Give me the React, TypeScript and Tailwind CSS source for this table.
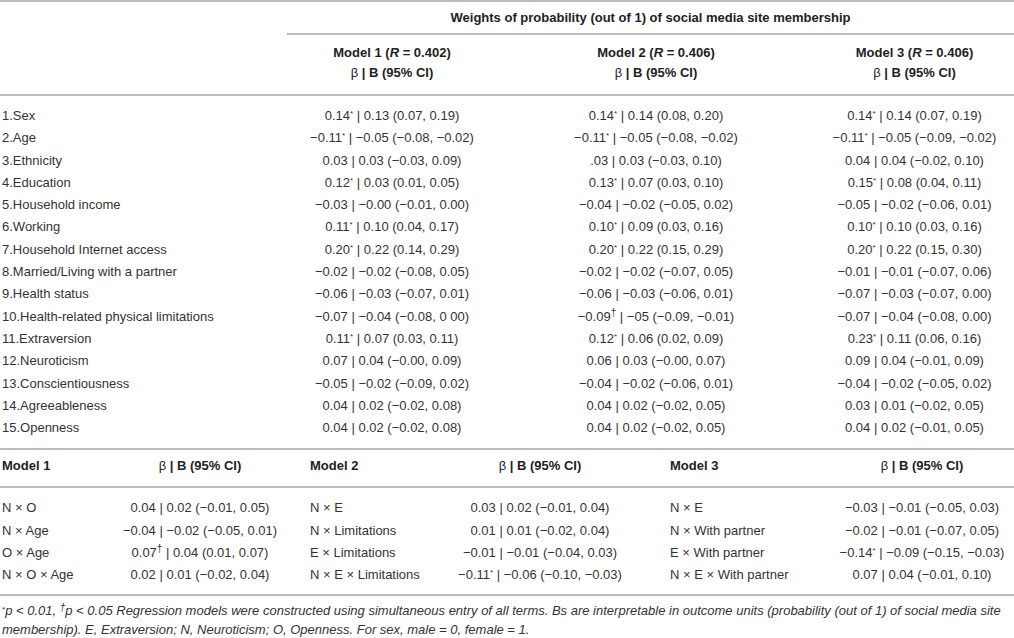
type Cell = [string, string, string];

const mainRows: { label: string; cells: Cell[] }[] = [
  { label: "1.Sex", cells: [["0.14", "*", "0.13 (0.07, 0.19)"], ["0.14", "*", "0.14 (0.08, 0.20)"], ["0.14", "*", "0.14 (0.07, 0.19)"]] },
  { label: "2.Age", cells: [["−0.11", "*", "−0.05 (−0.08, −0.02)"], ["−0.11", "*", "−0.05 (−0.08, −0.02)"], ["−0.11", "*", "−0.05 (−0.09, −0.02)"]] },
  { label: "3.Ethnicity", cells: [["0.03", "", "0.03 (−0.03, 0.09)"], [".03", "", "0.03 (−0.03, 0.10)"], ["0.04", "", "0.04 (−0.02, 0.10)"]] },
  { label: "4.Education", cells: [["0.12", "*", "0.03 (0.01, 0.05)"], ["0.13", "*", "0.07 (0.03, 0.10)"], ["0.15", "*", "0.08 (0.04, 0.11)"]] },
  { label: "5.Household income", cells: [["−0.03", "", "−0.00 (−0.01, 0.00)"], ["−0.04", "", "−0.02 (−0.05, 0.02)"], ["−0.05", "", "−0.02 (−0.06, 0.01)"]] },
  { label: "6.Working", cells: [["0.11", "*", "0.10 (0.04, 0.17)"], ["0.10", "*", "0.09 (0.03, 0.16)"], ["0.10", "*", "0.10 (0.03, 0.16)"]] },
  { label: "7.Household Internet access", cells: [["0.20", "*", "0.22 (0.14, 0.29)"], ["0.20", "*", "0.22 (0.15, 0.29)"], ["0.20", "*", "0.22 (0.15, 0.30)"]] },
  { label: "8.Married/Living with a partner", cells: [["−0.02", "", "−0.02 (−0.08, 0.05)"], ["−0.02", "", "−0.02 (−0.07, 0.05)"], ["−0.01", "", "−0.01 (−0.07, 0.06)"]] },
  { label: "9.Health status", cells: [["−0.06", "", "−0.03 (−0.07, 0.01)"], ["−0.06", "", "−0.03 (−0.06, 0.01)"], ["−0.07", "", "−0.03 (−0.07, 0.00)"]] },
  { label: "10.Health-related physical limitations", cells: [["−0.07", "", "−0.04 (−0.08, 0 00)"], ["−0.09", "†", "−05 (−0.09, −0.01)"], ["−0.07", "", "−0.04 (−0.08, 0.00)"]] },
  { label: "11.Extraversion", cells: [["0.11", "*", "0.07 (0.03, 0.11)"], ["0.12", "*", "0.06 (0.02, 0.09)"], ["0.23", "*", "0.11 (0.06, 0.16)"]] },
  { label: "12.Neuroticism", cells: [["0.07", "", "0.04 (−0.00, 0.09)"], ["0.06", "", "0.03 (−0.00, 0.07)"], ["0.09", "", "0.04 (−0.01, 0.09)"]] },
  { label: "13.Conscientiousness", cells: [["−0.05", "", "−0.02 (−0.09, 0.02)"], ["−0.04", "", "−0.02 (−0.06, 0.01)"], ["−0.04", "", "−0.02 (−0.05, 0.02)"]] },
  { label: "14.Agreeableness", cells: [["0.04", "", "0.02 (−0.02, 0.08)"], ["0.04", "", "0.02 (−0.02, 0.05)"], ["0.03", "", "0.01 (−0.02, 0.05)"]] },
  { label: "15.Openness", cells: [["0.04", "", "0.02 (−0.02, 0.08)"], ["0.04", "", "0.02 (−0.02, 0.05)"], ["0.04", "", "0.02 (−0.01, 0.05)"]] },
];

const interactionRows: [string, Cell][][] = [
  [["N × O", ["0.04", "", "0.02 (−0.01, 0.05)"]], ["N × E", ["0.03", "", "0.02 (−0.01, 0.04)"]], ["N × E", ["−0.03", "", "−0.01 (−0.05, 0.03)"]]],
  [["N × Age", ["−0.04", "", "−0.02 (−0.05, 0.01)"]], ["N × Limitations", ["0.01", "", "0.01 (−0.02, 0.04)"]], ["N × With partner", ["−0.02", "", "−0.01 (−0.07, 0.05)"]]],
  [["O × Age", ["0.07", "†", "0.04 (0.01, 0.07)"]], ["E × Limitations", ["−0.01", "", "−0.01 (−0.04, 0.03)"]], ["E × With partner", ["−0.14", "*", "−0.09 (−0.15, −0.03)"]]],
  [["N × O × Age", ["0.02", "", "0.01 (−0.02, 0.04)"]], ["N × E × Limitations", ["−0.11", "*", "−0.06 (−0.10, −0.03)"]], ["N × E × With partner", ["0.07", "", "0.04 (−0.01, 0.10)"]]],
];

// superscript marks: leading-none keeps the row height fixed
const Mark = ({ mark }: { mark: string }) =>
  mark === "*" ? (
    <span className="relative -top-[4px] text-[8px] leading-none">*</span>
  ) : mark === "†" ? (
    <span className="relative -top-[5px] text-[10px] leading-none">†</span>
  ) : null;

const Value = ({ cell }: { cell: Cell }) => (
  <span className="whitespace-nowrap">
    {cell[0]}
    <Mark mark={cell[1]} /> | {cell[2]}
  </span>
);

const BetaHead = () => (
  <span className="whitespace-nowrap font-bold">
    <span className="font-normal">β</span> | B (95% CI)
  </span>
);

export default function App() {
  return (
    <div className="w-[1014px] h-[638px] overflow-hidden bg-white text-[#333] text-[13px] font-['Liberation_Sans',Arial,sans-serif]">
      <div className="h-[2px] bg-[#bcbcbc]" />

      {/* group header */}
      <div className="grid grid-cols-[287px_727px] h-[31px] items-center">
        <div />
        <div className="text-center font-bold text-[#222]">
          Weights of probability (out of 1) of social media site membership
        </div>
      </div>
      <div className="ml-[287px] h-[2px] bg-[#bcbcbc]" />

      {/* model headers */}
      <div className="grid grid-cols-[287px_210px_318px_199px] pt-[8px] pb-[11px] leading-[20px] text-[#222]">
        <div />
        {["0.402", "0.406", "0.406"].map((r, i) => (
          <div key={i} className="flex flex-col items-center">
            <span className="whitespace-nowrap font-bold">
              Model {i + 1} (<i>R</i> = {r})
            </span>
            <BetaHead />
          </div>
        ))}
      </div>
      <div className="h-[2px] bg-[#bcbcbc]" />

      {/* main rows */}
      <div className="pt-[9px] pb-[9px]">
        {mainRows.map((row) => (
          <div
            key={row.label}
            className="grid grid-cols-[287px_210px_318px_199px] h-[22.3px] leading-[22.3px]"
          >
            <div className="pl-[2px] whitespace-nowrap">{row.label}</div>
            {row.cells.map((c, i) => (
              <div key={i} className="flex justify-center">
                <Value cell={c} />
              </div>
            ))}
          </div>
        ))}
      </div>
      <div className="h-[2px] bg-[#bcbcbc]" />

      {/* interaction header */}
      <div className="grid grid-cols-[110px_180px_160px_180px_200px_184px] pt-[5px] pb-[9px] leading-[22px] text-[#222]">
        <div className="pl-[2px] font-bold">Model 1</div>
        <div className="flex justify-center"><BetaHead /></div>
        <div className="pl-[20px] font-bold">Model 2</div>
        <div className="flex justify-center"><BetaHead /></div>
        <div className="pl-[40px] font-bold">Model 3</div>
        <div className="flex justify-center"><BetaHead /></div>
      </div>
      <div className="h-[2px] bg-[#bcbcbc]" />

      {/* interaction rows */}
      <div className="pt-[9px] pb-[7px]">
        {interactionRows.map((row, r) => (
          <div
            key={r}
            className="grid grid-cols-[110px_180px_160px_180px_200px_184px] h-[22.3px] leading-[22.3px]"
          >
            {row.map(([label, cell], i) => [
              <div
                key={`l${i}`}
                className={`whitespace-nowrap ${i === 0 ? "pl-[2px]" : i === 1 ? "pl-[20px]" : "pl-[40px]"}`}
              >
                {label}
              </div>,
              <div key={`v${i}`} className="flex justify-center">
                <Value cell={cell} />
              </div>,
            ])}
          </div>
        ))}
      </div>
      <div className="h-[2px] bg-[#bcbcbc]" />

      {/* footnote */}
      <div className="pt-[5px] pl-[2px] italic leading-[19px] whitespace-nowrap text-[13px]">
        <span className="relative -top-[3px] text-[8px] leading-none not-italic">*</span>p &lt; 0.01,{" "}
        <span className="relative -top-[4px] text-[10px] leading-none">†</span>p &lt; 0.05 Regression
        models were constructed using simultaneous entry of all terms. Bs are interpretable in
        outcome units (probability (out of 1) of social media site
        <br />
        membership). E, Extraversion; N, Neuroticism; O, Openness. For sex, male = 0, female = 1.
      </div>
    </div>
  );
}
